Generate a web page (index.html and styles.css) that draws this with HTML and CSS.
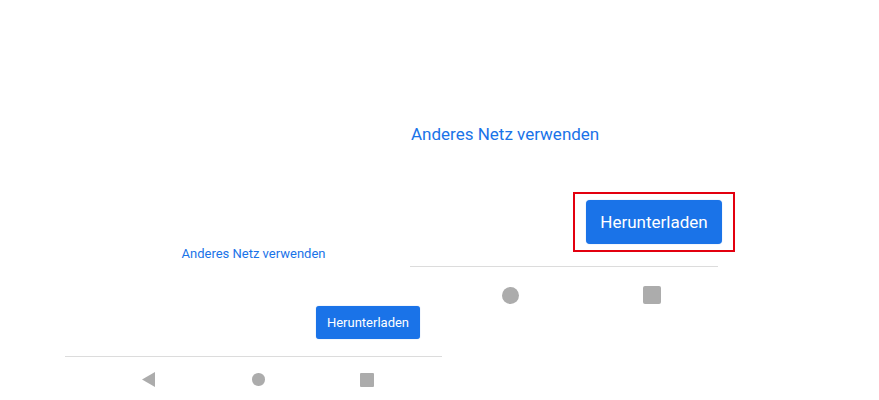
FILE: index.html
```html
<!DOCTYPE html>
<html lang="de">
<head>
<meta charset="utf-8">
<title>Herunterladen</title>
<link rel="stylesheet" href="styles.css">
</head>
<body>
<div class="canvas">
  <section class="shot shot-small">
    <div class="link link-sm">Anderes Netz verwenden</div>
    <div class="btn-row">
      <button class="btn btn-sm">Herunterladen</button>
    </div>
    <div class="divider"></div>
    <div class="nav nav-sm">
      <svg class="ico tri" width="13" height="15" viewBox="0 0 13 15"><polygon points="13,0 13,15 0,7.5" fill="#acacac"/></svg>
      <span class="ico dot"></span>
      <span class="ico sq"></span>
    </div>
  </section>

  <section class="shot shot-large">
    <div class="link link-lg">Anderes Netz verwenden</div>
    <div class="highlight">
      <button class="btn btn-lg">Herunterladen</button>
    </div>
    <div class="divider divider-lg"></div>
    <div class="nav nav-lg">
      <span class="ico dot dot-lg"></span>
      <span class="ico sq sq-lg"></span>
    </div>
  </section>
</div>
</body>
</html>
```

FILE: styles.css
```css
* { box-sizing: border-box; }
html, body {
  margin: 0;
  padding: 0;
  background: #ffffff;
}
body {
  font-family: Roboto, "Liberation Sans", Arial, sans-serif;
}
.canvas {
  position: relative;
  width: 879px;
  height: 400px;
  overflow: hidden;
  background: #fff;
}
.shot {
  position: absolute;
  display: flex;
  flex-direction: column;
}
.shot-small {
  left: 65px;
  top: 246px;
  width: 377px;
  z-index: 2;
}
.shot-large {
  left: 410px;
  top: 124px;
  width: 330px;
  z-index: 1;
}
.link {
  color: #1a73e8;
  font-weight: 400;
  white-space: nowrap;
}
.link-sm {
  font-size: 13px;
  line-height: 15px;
  text-align: center;
}
.link-lg {
  font-size: 17px;
  line-height: 20px;
  padding-left: 1px;
}
.btn-row {
  display: flex;
  justify-content: flex-end;
  padding-right: 22px;
  margin-top: 45px;
}
.btn {
  border: none;
  background: #1a73e8;
  color: #ffffff;
  font-family: Roboto, "Liberation Sans", Arial, sans-serif;
  font-weight: 400;
  padding: 0;
  display: flex;
  align-items: center;
  justify-content: center;
  box-shadow: 0 0 1px rgba(26, 115, 232, 0.5);
}
.btn-sm {
  width: 104px;
  height: 33px;
  font-size: 13px;
  border-radius: 3px;
}
.btn-lg {
  width: 136px;
  height: 44px;
  font-size: 17px;
  border-radius: 4px;
}
.highlight {
  align-self: flex-start;
  margin-top: 48px;
  margin-left: 163px;
  border: 2px solid #e3000f;
  padding: 6px 11px;
}
.divider {
  height: 1px;
  background: #dcdcdc;
  margin-top: 17px;
  width: 100%;
}
.divider-lg {
  width: 308px;
  margin-top: 14px;
}
.nav {
  display: flex;
  align-items: center;
  position: relative;
}
.ico {
  display: block;
  flex: none;
}
.nav-sm {
  margin-top: 15px;
  height: 15px;
}
.tri {
  margin-left: 77px;
}
.dot {
  width: 12.5px;
  height: 12.5px;
  border-radius: 50%;
  background: #acacac;
  margin-left: 97px;
}
.sq {
  width: 14px;
  height: 14px;
  background: #acacac;
  border-radius: 1px;
  margin-left: 95px;
}
.nav-lg {
  margin-top: 19px;
  height: 18px;
}
.dot-lg {
  width: 17px;
  height: 17px;
  margin-left: 92px;
}
.sq-lg {
  width: 18px;
  height: 18px;
  border-radius: 2px;
  margin-left: 124px;
}
```
